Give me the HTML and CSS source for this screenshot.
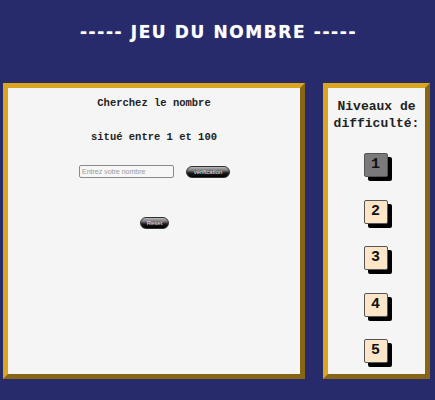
FILE: index.html
```html
<!DOCTYPE html>
<html lang="fr">
<head>
<meta charset="utf-8">
<title>Jeu du nombre</title>
<link rel="stylesheet" href="styles.css">
</head>
<body>
<h1 class="title">----- JEU DU NOMBRE -----</h1>
<div class="panels">
  <div class="panel main">
    <p class="line first">Cherchez le nombre</p>
    <p class="line second">situé entre 1 et 100</p>
    <div class="row">
      <input class="guess" type="text" placeholder="Entrez votre nombre">
      <button class="pill verify">vérification</button>
    </div>
    <div class="reset-row">
      <button class="pill reset">Reset</button>
    </div>
  </div>
  <div class="panel side">
    <p class="levels-title">Niveaux de<br>difficulté:</p>
    <div class="levels">
      <button class="level active">1</button>
      <button class="level">2</button>
      <button class="level">3</button>
      <button class="level">4</button>
      <button class="level">5</button>
    </div>
  </div>
</div>
</body>
</html>
```

FILE: styles.css
```css
html, body {
  margin: 0;
  padding: 0;
  background: #272a6b;
  height: 100%;
  overflow: hidden;
}

.title {
  margin: 0;
  padding-top: 21px;
  padding-left: 2px;
  height: 62px;
  box-sizing: border-box;
  text-align: center;
  color: #ffffff;
  font-family: "DejaVu Sans", sans-serif;
  font-weight: bold;
  font-size: 17px;
  line-height: 22px;
  letter-spacing: 1.6px;
  text-shadow: 0 0 1px #aab;
}

.panels {
  display: flex;
  margin-top: 21px;
  padding-left: 3px;
  gap: 18px;
}

.panel {
  box-sizing: border-box;
  height: 296px;
  background: #f5f5f5;
  border: 5px outset #daa520;
}

.main {
  width: 302px;
}

.side {
  width: 107px;
}

.line {
  margin: 0;
  text-align: center;
  font-family: "Liberation Mono", monospace;
  font-weight: bold;
  font-size: 10.5px;
  line-height: 14px;
  color: #222;
}

.first {
  margin-top: 8px;
}

.second {
  margin-top: 20px;
}

.row {
  display: flex;
  justify-content: center;
  align-items: center;
  gap: 12px;
  margin-top: 21px;
  padding-left: 1px;
}

.guess {
  box-sizing: border-box;
  width: 95px;
  height: 13px;
  margin: 0;
  padding: 0 2px;
  border: 1px solid #8a8a8a;
  border-radius: 2px;
  background: #f7f7f7;
  font-family: "Liberation Sans", sans-serif;
  font-size: 7px;
  color: #333;
}

.guess::placeholder {
  color: #999;
}

.pill {
  box-sizing: border-box;
  margin: 0;
  padding: 0;
  height: 12px;
  border: 1px solid #333;
  border-radius: 6px;
  background: linear-gradient(#b8b8b8 0%, #777 35%, #1a1a1a 60%, #000 100%);
  color: #e8e8ff;
  font-family: "Liberation Sans", sans-serif;
  font-size: 6px;
  line-height: 10px;
}

.verify {
  width: 44px;
}

.reset-row {
  display: flex;
  justify-content: center;
  margin-top: 39px;
  padding-left: 1px;
}

.reset {
  width: 29px;
}

.levels-title {
  margin: 10px 0 0;
  text-align: center;
  font-family: "Liberation Mono", monospace;
  font-weight: bold;
  font-size: 13px;
  line-height: 17px;
  color: #222;
}

.levels {
  display: flex;
  flex-direction: column;
  align-items: center;
  gap: 22.5px;
  margin-top: 21px;
}

.level {
  box-sizing: border-box;
  width: 24px;
  height: 24px;
  margin: 0;
  padding: 0;
  border: 1px solid #555;
  border-radius: 2px;
  background: #fde6c8;
  box-shadow: 4px 4px 0 #000;
  font-family: "Liberation Mono", monospace;
  font-weight: bold;
  font-size: 15px;
  line-height: 22px;
  color: #111;
  transform: translateX(-1px);
}

.level.active {
  background: #7a7a7a;
}
```
